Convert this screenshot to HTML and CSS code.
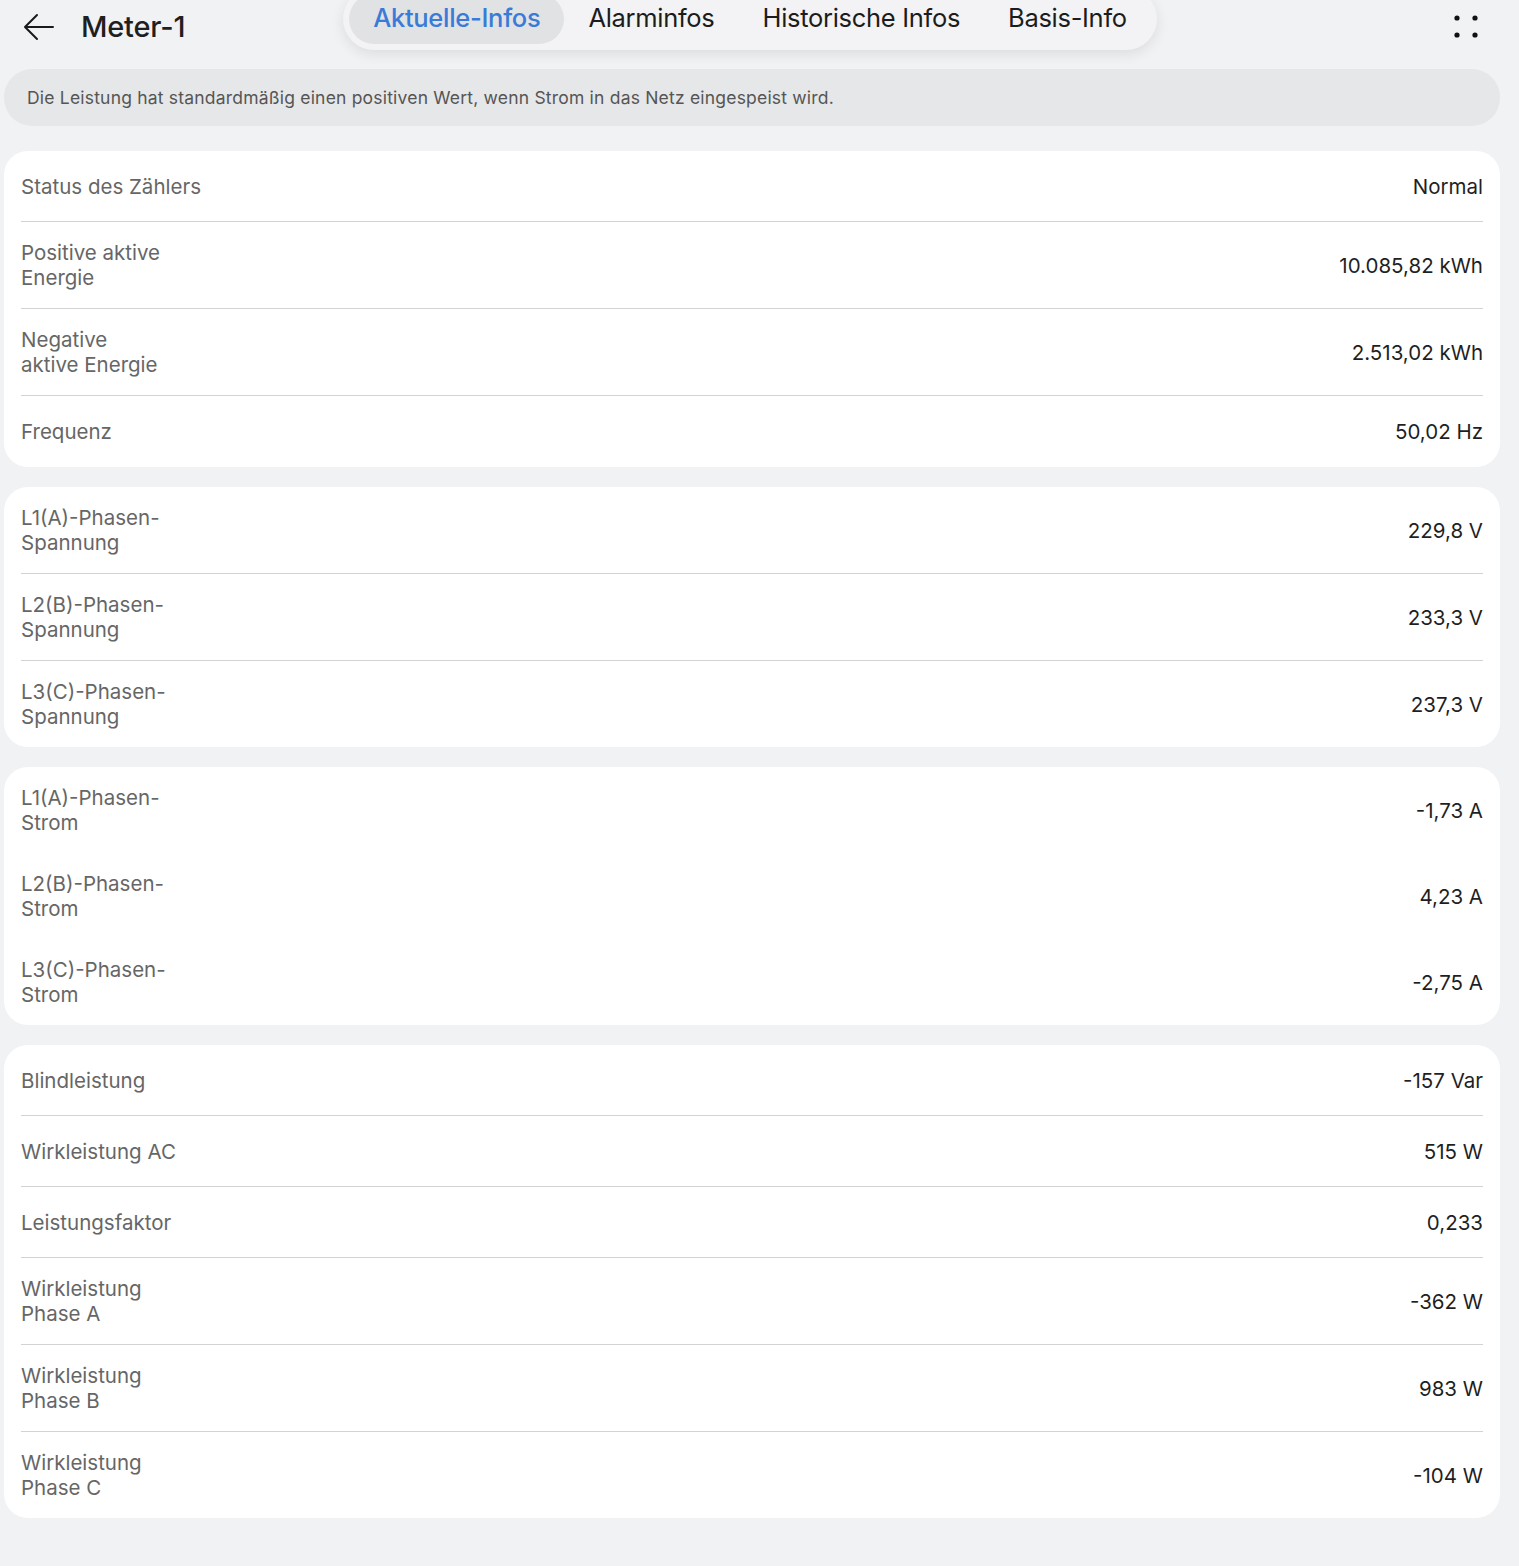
FILE: index.html
```html
<!DOCTYPE html>
<html lang="de">
<head>
  <meta charset="UTF-8" />
  <meta name="viewport" content="width=device-width, initial-scale=1" />
  <title>Meter-1</title>
  <link rel="stylesheet" href="styles.css">
</head>
<body>
  <div class="header">
    <div class="header-left">
      <svg class="back" width="32" height="28" viewBox="0 0 32 28">
        <path d="M30 14H3M14 2L2 14l12 12" fill="none" stroke="#1a1a1a" stroke-width="2" stroke-linecap="round" stroke-linejoin="round" />
      </svg>
      <h1>Meter-1</h1>
    </div>
    <div class="tabs">
      <span class="tab active">Aktuelle-Infos</span>
      <span class="tab">Alarminfos</span>
      <span class="tab">Historische Infos</span>
      <span class="tab">Basis-Info</span>
    </div>
    <div class="header-right">
      <svg width="24" height="24" viewBox="0 0 24 24">
        <circle cx="3" cy="3" r="2.6" fill="#111" />
        <circle cx="21" cy="3" r="2.6" fill="#111" />
        <circle cx="3" cy="20" r="2.6" fill="#111" />
        <circle cx="21" cy="20" r="2.6" fill="#111" />
      </svg>
    </div>
  </div>

  <div class="notice">Die Leistung hat standardmäßig einen positiven Wert, wenn Strom in das Netz eingespeist wird.</div>

  <!-- Zählerstatus und Energie -->
  <div class="card">
    <div class="row"><span class="label">Status des Zählers</span><span class="value">Normal</span></div>
    <div class="row"><span class="label">Positive aktive<br />Energie</span><span class="value">10.085,82 kWh</span></div>
    <div class="row"><span class="label">Negative<br />aktive Energie</span><span class="value">2.513,02 kWh</span></div>
    <div class="row"><span class="label">Frequenz</span><span class="value">50,02 Hz</span></div>
  </div>

  <!-- Spannungen -->
  <div class="card">
    <div class="row"><span class="label">L1(A)-Phasen-<br />Spannung</span><span class="value">229,8 V</span></div>
    <div class="row"><span class="label">L2(B)-Phasen-<br />Spannung</span><span class="value">233,3 V</span></div>
    <div class="row"><span class="label">L3(C)-Phasen-<br />Spannung</span><span class="value">237,3 V</span></div>
  </div>

  <!-- Ströme -->
  <div class="card plain">
    <div class="row"><span class="label">L1(A)-Phasen-<br />Strom</span><span class="value">-1,73 A</span></div>
    <div class="row"><span class="label">L2(B)-Phasen-<br />Strom</span><span class="value">4,23 A</span></div>
    <div class="row"><span class="label">L3(C)-Phasen-<br />Strom</span><span class="value">-2,75 A</span></div>
  </div>

  <!-- Leistung -->
  <div class="card">
    <div class="row"><span class="label">Blindleistung</span><span class="value">-157 Var</span></div>
    <div class="row"><span class="label">Wirkleistung AC</span><span class="value">515 W</span></div>
    <div class="row"><span class="label">Leistungsfaktor</span><span class="value">0,233</span></div>
    <div class="row"><span class="label">Wirkleistung<br />Phase A</span><span class="value">-362 W</span></div>
    <div class="row"><span class="label">Wirkleistung<br />Phase B</span><span class="value">983 W</span></div>
    <div class="row"><span class="label">Wirkleistung<br />Phase C</span><span class="value">-104 W</span></div>
  </div>
</body>
</html>
```

FILE: styles.css
```css
body {
  margin: 0;
  padding: 0 19px 40px 4px;
  background: #f1f2f4;
  font-family: Inter, "Noto Sans", sans-serif;
  color: #1f1f1f;
}
.header {
  display: grid;
  grid-template-columns: 1fr auto 1fr;
  align-items: start;
  height: 69px;
}
.header-left {
  display: flex;
  align-items: center;
  gap: 26px;
  padding: 9px 0 0 19px;
}
.header-left h1 {
  margin: 0;
  font-size: 29px;
  line-height: 35px;
  font-weight: 500;
  letter-spacing: -0.2px;
}
.tabs {
  display: flex;
  margin: -12px 0 0 -4px;
  padding: 6px;
  background: #f3f3f5;
  border-radius: 32px;
  box-shadow: 0 4px 14px rgba(0, 0, 0, 0.09);
}
.tab {
  padding: 8px 24px 11px;
  font-size: 25.5px;
  line-height: 31px;
  letter-spacing: -0.3px;
  color: #1c1c1c;
  border-radius: 26px;
}
.tab.active {
  background: #e1e2e4;
  color: #3a7bd8;
  font-weight: 500;
}
.header-right {
  display: flex;
  justify-content: flex-end;
  padding: 15px 22px 0 0;
}
.notice {
  background: #e6e7e9;
  border-radius: 28px;
  padding: 18px 23px;
  font-size: 17.5px;
  line-height: 21px;
  letter-spacing: 0.2px;
  color: #555;
  margin-bottom: 25px;
}
.card {
  background: #fff;
  border-radius: 24px;
  padding: 0 17px;
  margin-bottom: 20px;
}
.row {
  display: flex;
  justify-content: space-between;
  align-items: center;
  min-height: 71px;
  padding: 18px 0;
  box-sizing: border-box;
  border-bottom: 1px solid #d3d3d3;
  font-size: 20.5px;
  line-height: 25px;
}
.row:last-child {
  border-bottom: none;
}
.card.plain .row {
  border-bottom: none;
}
.label {
  color: #666;
}
.value {
  color: #1f1f1f;
  text-align: right;
}
```
